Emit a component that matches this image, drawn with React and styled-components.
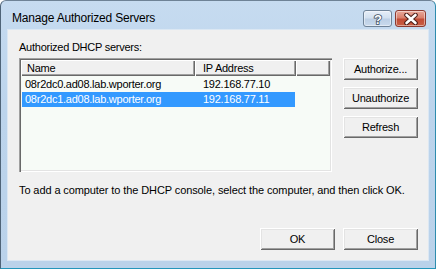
import React from "react";
import styled, { createGlobalStyle } from "styled-components";

const Global = createGlobalStyle`
  html, body { margin: 0; padding: 0; background: #ffffff; overflow: hidden; }
  * { box-sizing: border-box; }
`;

const Window = styled.div`
  width: 436px;
  height: 269px;
  display: flex;
  flex-direction: column;
  background: linear-gradient(180deg, #c6dbf0 0%, #bcd4ec 40%, #bad2ea 100%);
  border-left: 1px solid #4f6478;
  border-top: 1px solid #6e8296;
  border-right: 1px solid #2e8cae;
  border-bottom: 1px solid #2496bb;
  border-radius: 6px 6px 0 0;
`;

const TitleBar = styled.div`
  height: 29px;
  display: flex;
  align-items: flex-start;
  padding: 0 9px 0 11px;
  flex: none;
`;

const Title = styled.div`
  margin-top: 9px;
  line-height: 16px;
  font-family: "Liberation Sans", Arial, sans-serif;
  font-size: 12px;
  color: #000;
  letter-spacing: -0.2px;
`;

const CaptionButtons = styled.div`
  margin-left: auto;
  margin-top: 9px;
  display: flex;
  gap: 3px;
`;

const CaptionButton = styled.div`
  width: ${(p) => p.$w}px;
  height: 17px;
  border-radius: 3px;
  border: 1px solid ${(p) => (p.$close ? "#8b3a30" : "#6f8398")};
  background: ${(p) =>
    p.$close
      ? "linear-gradient(180deg, #e9a99b 0%, #d9806d 45%, #c24c36 55%, #c95f45 100%)"
      : "linear-gradient(180deg, #e6eef8 0%, #d3e1f0 45%, #bccfe5 55%, #c9daed 100%)"};
  box-shadow: inset 0 0 0 1px rgba(255, 255, 255, 0.45);
  display: flex;
  align-items: center;
  justify-content: center;
`;

const Client = styled.div`
  flex: 1;
  margin: 0 7px 8px 7px;
  background: #f0f0f0;
  outline: 1px solid #dbe7f3;
  display: flex;
  flex-direction: column;
  padding: 11px 10px 10px 11px;
  font-family: "Liberation Sans", Arial, sans-serif;
  font-size: 11px;
  letter-spacing: -0.25px;
  color: #000;
`;

const Label = styled.div`
  line-height: 13px;
  height: 13px;
  margin-bottom: 4px;
`;

const MainRow = styled.div`
  display: flex;
  align-items: flex-start;
`;

const ListView = styled.div`
  width: 313px;
  height: 114px;
  padding: 2px;
  background: #f7fbf7;
  box-shadow: inset 1px 1px 0 #a0a0a0, inset 2px 2px 0 #696969,
    inset -1px -1px 0 #ffffff, inset -2px -2px 0 #e3e3e3;
  display: flex;
  flex-direction: column;
`;

const Header = styled.div`
  display: flex;
  height: 16px;
  flex: none;
`;

const HeaderCell = styled.div`
  width: ${(p) => p.$w}px;
  flex: ${(p) => (p.$fill ? "1" : "none")};
  height: 16px;
  line-height: 16px;
  padding-left: ${(p) => p.$pad}px;
  background: #f0f0f0;
  box-shadow: inset 1px 1px 0 #ffffff, inset -1px -1px 0 #696969,
    inset -2px -2px 0 #a0a0a0;
  white-space: nowrap;
  overflow: hidden;
`;

const Rows = styled.div`
  padding: 1px 0 0 1px;
  display: flex;
  flex-direction: column;
`;

const Row = styled.div`
  display: flex;
  width: 273px;
  height: 15px;
  line-height: 15px;
  background: ${(p) => (p.$selected ? "#3399ff" : "transparent")};
  color: ${(p) => (p.$selected ? "#ffffff" : "#000000")};
`;

const Cell = styled.div`
  width: ${(p) => p.$w}px;
  flex: none;
  padding-left: ${(p) => p.$pad}px;
  white-space: nowrap;
  overflow: hidden;
`;

const SideButtons = styled.div`
  margin-left: 11px;
  display: flex;
  flex-direction: column;
  gap: 7px;
`;

const Button = styled.button`
  width: 75px;
  height: 22px;
  padding: 0;
  border: none;
  background: #f0f0f0;
  box-shadow: inset 1px 1px 0 #ffffff, inset -1px -1px 0 #696969,
    inset 2px 2px 0 #e3e3e3, inset -2px -2px 0 #a0a0a0;
  font-family: "Liberation Sans", Arial, sans-serif;
  font-size: 11px;
  letter-spacing: -0.2px;
  color: #000;
  line-height: 20px;
  text-align: center;
`;

const Hint = styled.div`
  margin-top: 12px;
  line-height: 13px;
  white-space: nowrap;
  letter-spacing: -0.1px;
`;

const Footer = styled.div`
  margin-top: auto;
  display: flex;
  justify-content: flex-end;
  gap: 8px;
`;

function HelpGlyph() {
  return (
    <svg width="14" height="14" viewBox="0 0 14 14">
      <text
        x="7"
        y="12"
        textAnchor="middle"
        fontFamily="'Liberation Sans', Arial, sans-serif"
        fontWeight="bold"
        fontSize="13"
        fill="#ffffff"
        stroke="#3d4f63"
        strokeWidth="1.6"
        paintOrder="stroke"
      >
        ?
      </text>
    </svg>
  );
}

function CloseGlyph() {
  return (
    <svg width="16" height="12" viewBox="0 0 16 12">
      <path d="M3.5 2 L12.5 10 M12.5 2 L3.5 10" stroke="#4a1d18" strokeWidth="4.6" strokeLinecap="round" />
      <path d="M3.5 2 L12.5 10 M12.5 2 L3.5 10" stroke="#ffffff" strokeWidth="2.6" strokeLinecap="round" />
    </svg>
  );
}

const servers = [
  { name: "08r2dc0.ad08.lab.wporter.org", ip: "192.168.77.10" },
  { name: "08r2dc1.ad08.lab.wporter.org", ip: "192.168.77.11", selected: true },
];

export default function App() {
  return (
    <>
      <Global />
      <Window>
        <TitleBar>
          <Title>Manage Authorized Servers</Title>
          <CaptionButtons>
            <CaptionButton $w={29}>
              <HelpGlyph />
            </CaptionButton>
            <CaptionButton $w={31} $close>
              <CloseGlyph />
            </CaptionButton>
          </CaptionButtons>
        </TitleBar>
        <Client>
          <Label>Authorized DHCP servers:</Label>
          <MainRow>
            <ListView>
              <Header>
                <HeaderCell $w={174} $pad={6}>Name</HeaderCell>
                <HeaderCell $w={101} $pad={8}>IP Address</HeaderCell>
                <HeaderCell $fill $pad={0} />
              </Header>
              <Rows>
                {servers.map((s) => (
                  <Row key={s.name} $selected={s.selected}>
                    <Cell $w={173} $pad={3}>{s.name}</Cell>
                    <Cell $w={100} $pad={8}>{s.ip}</Cell>
                  </Row>
                ))}
              </Rows>
            </ListView>
            <SideButtons>
              <Button>Authorize...</Button>
              <Button>Unauthorize</Button>
              <Button>Refresh</Button>
            </SideButtons>
          </MainRow>
          <Hint>
            To add a computer to the DHCP console, select the computer, and then click OK.
          </Hint>
          <Footer>
            <Button>OK</Button>
            <Button>Close</Button>
          </Footer>
        </Client>
      </Window>
    </>
  );
}
